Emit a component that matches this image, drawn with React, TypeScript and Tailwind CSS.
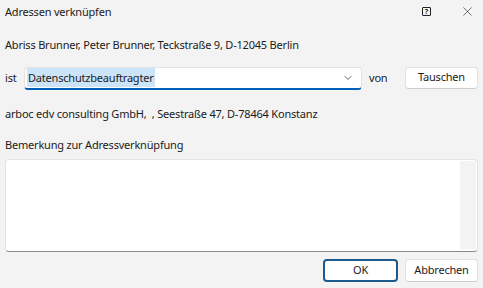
import React from 'react';
import { ChevronDown, X } from 'lucide-react';

const font = { fontFamily: '"Noto Sans", "Segoe UI", sans-serif' };

const App: React.FC = () => {
  return (
    <div
      className="w-[483px] h-[288px] bg-[#f3f3f3] text-[#1b1b1b] text-[11px] tracking-[-0.2px] flex flex-col overflow-hidden"
      style={font}
    >
      {/* Title bar */}
      <div className="h-[22px] flex items-center pl-[5px]">
        <span className="flex-1 leading-none">Adressen verknüpfen</span>
        <div className="w-[9px] h-[9px] border border-[#222] rounded-[1px] flex items-center justify-center text-[7px] font-bold leading-none tracking-normal mr-[29px]">
          ?
        </div>
        <X size={15} strokeWidth={1} className="mr-[8px] text-[#222]" />
      </div>

      <div className="px-[5px] flex flex-col">
        <div className="mt-[14px] h-[18px] flex items-center">
          Abriss Brunner, Peter Brunner, Teckstraße 9, D-12045 Berlin
        </div>

        {/* Relation row */}
        <div className="mt-[13px] h-[23px] flex items-center">
          <span className="w-[19px]">ist</span>
          <div className="w-[338px] h-[23px] bg-white rounded-[4px] border border-[#e3e3e3] border-b-2 border-b-[#005fb8] flex items-center pl-[2px] pr-[7px]">
            <span className="flex-1">
              <span className="bg-[#cce4f7] px-[1px] py-[2px]">Datenschutzbeauftragter</span>
            </span>
            <ChevronDown size={12} strokeWidth={1.5} className="text-[#333]" />
          </div>
          <span className="ml-[7px] w-[36px]">von</span>
          <button className="w-[73px] h-[22px] bg-white rounded-[4px] border border-[#e2e2e2] border-b-[#cdcdcd] -mt-[2px]">
            Tauschen
          </button>
        </div>

        <div className="mt-[15px] h-[18px] flex items-center whitespace-pre">
          arboc edv consulting GmbH,  , Seestraße 47, D-78464 Konstanz
        </div>

        <div className="mt-[13px] h-[18px] flex items-center">Bemerkung zur Adressverknüpfung</div>

        {/* Remark box */}
        <div className="mt-[5px] h-[93px] w-[473px] bg-white rounded-[4px] border border-[#e3e3e3] border-b-[#8a8a8a] flex justify-end pr-[1px] pt-[1px] pb-[2px]">
          <div className="w-[16px] bg-[#f3f3f3]" />
        </div>

        {/* Buttons */}
        <div className="mt-[7px] h-[23px] flex justify-end gap-[7px]">
          <button className="w-[75px] h-[23px] bg-white rounded-[4px] border-2 border-[#1a5a90]">OK</button>
          <button className="w-[73px] h-[23px] bg-white rounded-[4px] border border-[#e2e2e2] border-b-[#cdcdcd]">
            Abbrechen
          </button>
        </div>
      </div>
    </div>
  );
};

export default App;
